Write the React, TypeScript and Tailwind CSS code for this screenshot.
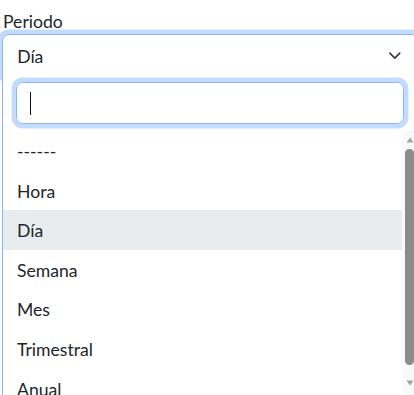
import React from 'react';

const options = ['------', 'Hora', 'Día', 'Semana', 'Mes', 'Trimestral', 'Anual', 'Otro'];

const Chevron: React.FC = () => (
  <svg width="17.6" height="13.2" viewBox="0 0 16 16" fill="none">
    <path d="m2 5 6 6 6-6" stroke="#343a40" strokeWidth="2" strokeLinecap="round" strokeLinejoin="round" />
  </svg>
);

const FakeScrollbar: React.FC = () => (
  <div className="w-[15px] shrink-0 h-full bg-[#f9f9f9] flex flex-col items-center">
    <div className="h-[17px] flex items-center justify-center pt-[2px]">
      <svg width="8" height="6" viewBox="0 0 8 6">
        <path d="M4 0.5 7.5 5.5H0.5Z" fill="#a3a3a3" />
      </svg>
    </div>
    <div className="w-[9px] h-[216px] mt-[1px] rounded-full bg-[#8c8c8c]" />
    <div className="flex-1" />
    <div className="h-[17px] flex items-center justify-center pb-[6px]">
      <svg width="8" height="6" viewBox="0 0 8 6">
        <path d="M0.5 0.5H7.5L4 5.5Z" fill="#a3a3a3" />
      </svg>
    </div>
  </div>
);

export default function App() {
  return (
    <div
      className="w-[414px] h-[395px] overflow-hidden bg-white text-[#212529]"
      style={{ fontFamily: '"Segoe UI", Lato, "Liberation Sans", sans-serif' }}
    >
      <div className="w-[420px] pl-[2px]">
        <label className="block h-[26.4px] mt-[8px] pt-[1px] text-[17.6px] leading-[26.4px] pl-[1px]">Periodo</label>

        <div className="w-[416.2px]">
          {/* selection */}
          <div className="relative z-0 h-[42px] flex items-center justify-between border border-b-0 border-[#86b7fe] rounded-tl-[6.6px] rounded-tr-[6.6px] shadow-[0_0_0_4.4px_rgba(13,110,253,0.25)] pl-[13.2px] pr-[13.2px]">
            <span className="text-[17.6px] leading-[26.4px] pl-[1px] pt-[2px]">Día</span>
            <Chevron />
          </div>

          {/* dropdown */}
          <div className="relative z-10 bg-white border border-t-0 border-[#86b7fe]">
            <div className="pt-[6px] px-[13.2px] pb-[6.6px]">
              <div className="h-[42px] border border-[#86b7fe] rounded-[6.6px] shadow-[0_0_0_4.4px_rgba(13,110,253,0.25)] flex items-center pl-[13.2px]">
                <div className="w-[1px] h-[23px] bg-[#111]" />
              </div>
            </div>

            <div className="h-[264px] flex overflow-hidden">
              <ul className="flex-1 min-w-0">
                {options.map((o) => (
                  <li
                    key={o}
                    className={`h-[39.6px] flex items-center pl-[14px] pt-[3px] text-[17.6px] ${o === 'Día' ? 'bg-[#e9ecef]' : ''}`}
                  >
                    {o}
                  </li>
                ))}
              </ul>
              <FakeScrollbar />
            </div>
          </div>
        </div>
      </div>
    </div>
  );
}
